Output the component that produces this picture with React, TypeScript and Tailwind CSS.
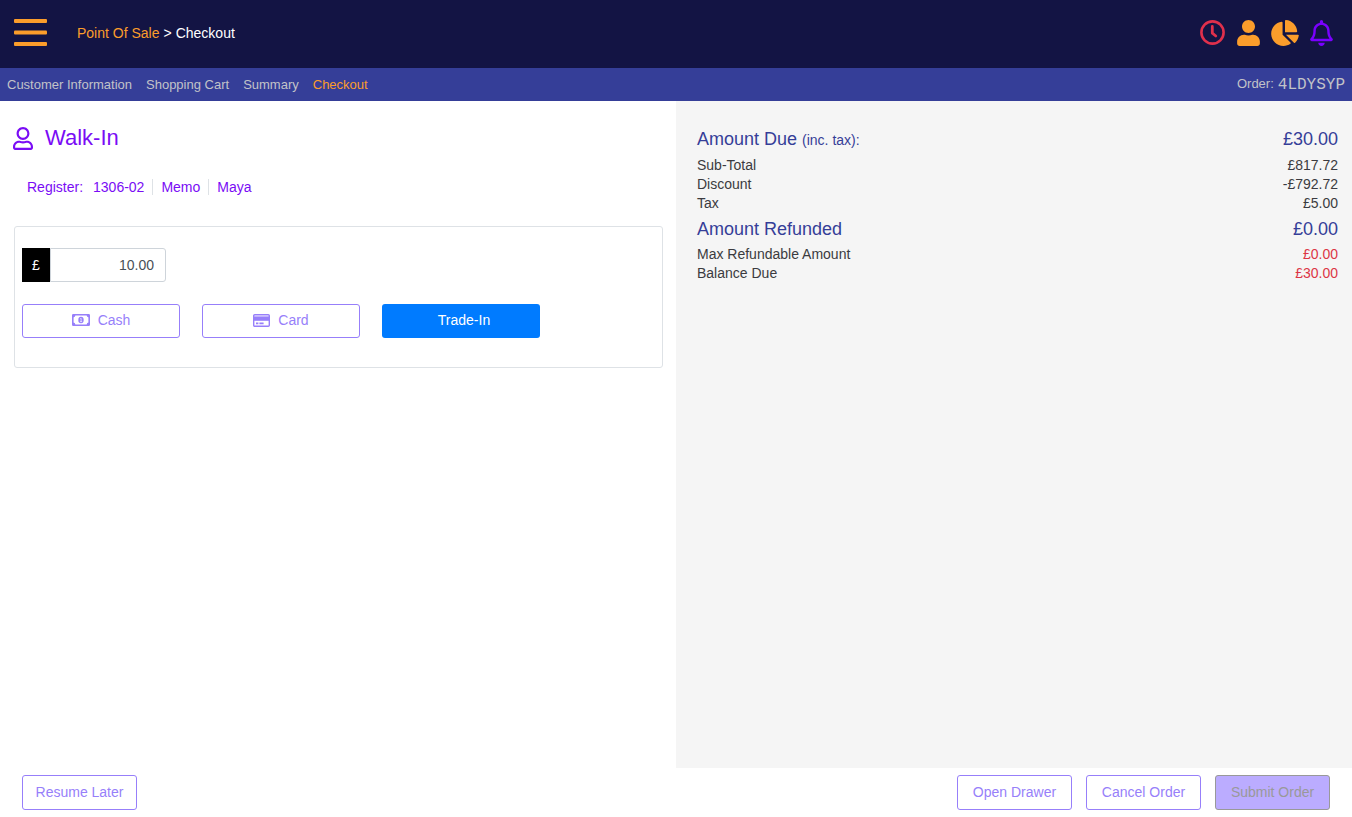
import type { ReactNode } from "react";
import { FaChartPie, FaRegBell, FaRegUser, FaUser } from "react-icons/fa";

const steps = ["Customer Information", "Shopping Cart", "Summary", "Checkout"];

const dueRows = [
  { label: "Sub-Total", value: "£817.72" },
  { label: "Discount", value: "-£792.72" },
  { label: "Tax", value: "£5.00" },
];

const refundRows = [
  { label: "Max Refundable Amount", value: "£0.00" },
  { label: "Balance Due", value: "£30.00" },
];

const MenuIcon = () => (
  <svg width="33" height="28" viewBox="0 0 33 28" fill="#fb9d2b">
    <rect width="33" height="4" rx="1" y="0" />
    <rect width="33" height="4" rx="1" y="11.5" />
    <rect width="33" height="4" rx="1" y="23" />
  </svg>
);

const ClockIcon = () => (
  <svg width="26" height="26" viewBox="0 0 26 26" fill="none" stroke="currentColor">
    <circle cx="12.5" cy="12.5" r="11.1" strokeWidth="2.6" />
    <path d="M12.3 6.5V13.2L15.8 16" strokeWidth="2.8" strokeLinecap="round" strokeLinejoin="round" />
  </svg>
);

const CashIcon = () => (
  <svg width="18" height="12" viewBox="0 0 18 12" fill="none">
    <rect x="0.8" y="0.8" width="16.4" height="10.4" rx="0.5" stroke="currentColor" strokeWidth="1.6" />
    <path
      d="M1 1h2.4a2.4 2.4 0 0 1-2.4 2.4zM17 1h-2.4a2.4 2.4 0 0 0 2.4 2.4zM1 11h2.4a2.4 2.4 0 0 0-2.4-2.4zM17 11h-2.4a2.4 2.4 0 0 1 2.4-2.4z"
      fill="currentColor"
    />
    <ellipse cx="9" cy="6" rx="2.7" ry="3.2" fill="currentColor" />
    <path d="M8.3 4.7L9.1 4.3V7.5M8.1 7.6H10.1" stroke="white" strokeWidth="0.7" />
  </svg>
);

const CardIcon = () => (
  <svg width="17" height="13" viewBox="0 0 17 13" fill="none">
    <rect x="0.7" y="0.7" width="15.6" height="11.6" rx="1" stroke="currentColor" strokeWidth="1.4" />
    <path d="M1 2.4h15v4.4H1z" fill="currentColor" />
    <path d="M3 9.4h2.4M6.4 9.4h4.2" stroke="currentColor" strokeWidth="1.6" />
  </svg>
);

const OutlineButton = ({
  children,
  className = "",
}: {
  children: ReactNode;
  className?: string;
}) => (
  <button
    type="button"
    className={`flex items-center justify-center rounded-[3px] border border-[#977ffa] bg-white pb-0.5 text-[#977ffa] ${className}`}
  >
    {children}
  </button>
);

const Header = () => (
  <header className="flex h-[68px] shrink-0 items-center justify-between bg-[#131444] pr-[19px] pb-0.5 pl-3.5">
    <div className="flex items-center gap-[30px]">
      <button type="button" aria-label="Menu">
        <MenuIcon />
      </button>
      <div className="flex gap-1 text-white">
        <a href="#pos" className="text-[#fb9d2b]">
          Point Of Sale
        </a>
        <span>&gt;</span>
        <span>Checkout</span>
      </div>
    </div>
    <div className="flex items-center gap-[11px] text-[#fb9d2b]">
      <button type="button" aria-label="Time clock" className="text-[#e0304c]">
        <ClockIcon />
      </button>
      <button type="button" aria-label="Account">
        <FaUser className="h-[26px] w-[23px]" />
      </button>
      <button type="button" aria-label="Reports">
        <FaChartPie className="h-[26px] w-7" />
      </button>
      <button type="button" aria-label="Notifications" className="text-[#7a00ff]">
        <FaRegBell className="h-[26px] w-[23px]" />
      </button>
    </div>
  </header>
);

const StepNav = () => (
  <nav className="flex h-[33px] shrink-0 items-center justify-between bg-[#353e98] px-[7px] text-[13px] text-[#c2c3c8]">
    <div className="flex gap-3.5 pt-0.5">
      {steps.map((step) => (
        <a
          key={step}
          href="#step"
          className={step === "Checkout" ? "text-[#fb9d2b]" : ""}
        >
          {step}
        </a>
      ))}
    </div>
    <div className="flex items-center gap-1">
      <span>Order:</span>
      <span className="font-['Courier_New','Liberation_Mono',monospace] text-base leading-5">
        4LDYSYP
      </span>
    </div>
  </nav>
);

const PaymentPanel = () => (
  <section className="bg-white px-[13px] pt-[21px]">
    <h1 className="flex items-center gap-3 text-[22px] leading-8 text-[#7a0cf5]">
      <FaRegUser className="h-[23px] w-5" />
      Walk-In
    </h1>
    <div className="mt-[23px] ml-3.5 flex items-center text-[#7a0cf5]">
      <span>Register:</span>
      <span className="ml-2.5 border-r border-[#dee2e6] pr-2 leading-4">1306-02</span>
      <a href="#memo" className="border-r border-[#dee2e6] px-2 leading-4">
        Memo
      </a>
      <a href="#maya" className="px-2 leading-4">
        Maya
      </a>
    </div>
    <div className="mt-[29px] ml-px rounded-[3px] border border-[#dee2e6] px-[7px] pt-[21px] pb-[29px]">
      <div className="flex h-[34px] w-36">
        <label
          htmlFor="amount"
          className="flex w-7 items-center justify-center bg-black text-white"
        >
          £
        </label>
        <input
          id="amount"
          type="text"
          defaultValue="10.00"
          className="min-w-0 flex-1 rounded-r-[3px] border border-[#ced4da] pr-[11px] text-right text-[#495057]"
        />
      </div>
      <div className="mt-[22px] flex gap-[22px]">
        <OutlineButton className="h-[34px] w-[158px] gap-2">
          <CashIcon />
          Cash
        </OutlineButton>
        <OutlineButton className="h-[34px] w-[158px] gap-2">
          <CardIcon />
          Card
        </OutlineButton>
        <button
          type="button"
          className="h-[34px] w-[158px] rounded-[3px] bg-[#007bff] pb-0.5 pl-1.5 text-white"
        >
          Trade-In
        </button>
      </div>
    </div>
  </section>
);

const SummaryPanel = () => (
  <section className="bg-[#f5f5f5] pt-[22px] pr-3.5 pl-[21px] text-[#3b3b40]">
    <div className="flex h-[33px] items-center justify-between pb-0.5 text-lg text-[#353e98]">
      <h2>
        Amount Due <span className="text-sm">(inc. tax):</span>
      </h2>
      <span>£30.00</span>
    </div>
    {dueRows.map((row) => (
      <div key={row.label} className="flex justify-between leading-[19px]">
        <span>{row.label}</span>
        <span>{row.value}</span>
      </div>
    ))}
    <div className="flex h-8 items-center justify-between text-lg text-[#353e98]">
      <h2>Amount Refunded</h2>
      <span>£0.00</span>
    </div>
    {refundRows.map((row) => (
      <div key={row.label} className="flex justify-between leading-[19px]">
        <span>{row.label}</span>
        <span className="text-[#dc3545]">{row.value}</span>
      </div>
    ))}
  </section>
);

const Footer = () => (
  <footer className="flex h-[49px] shrink-0 items-start justify-between bg-white px-[22px] pt-[7px]">
    <OutlineButton className="h-[35px] w-[115px]">Resume Later</OutlineButton>
    <div className="flex gap-3.5">
      <OutlineButton className="h-[35px] w-[115px]">Open Drawer</OutlineButton>
      <OutlineButton className="h-[35px] w-[115px]">Cancel Order</OutlineButton>
      <button
        type="button"
        disabled
        className="h-[35px] w-[115px] rounded-[3px] border border-[#999] bg-[#bbacff] pb-0.5 text-[#999]"
      >
        Submit Order
      </button>
    </div>
  </footer>
);

export default function App() {
  return (
    <div className="flex min-h-screen flex-col font-['Liberation_Sans',Arial,sans-serif] text-sm">
      <Header />
      <StepNav />
      <main className="grid flex-1 grid-cols-2">
        <PaymentPanel />
        <SummaryPanel />
      </main>
      <Footer />
    </div>
  );
}
